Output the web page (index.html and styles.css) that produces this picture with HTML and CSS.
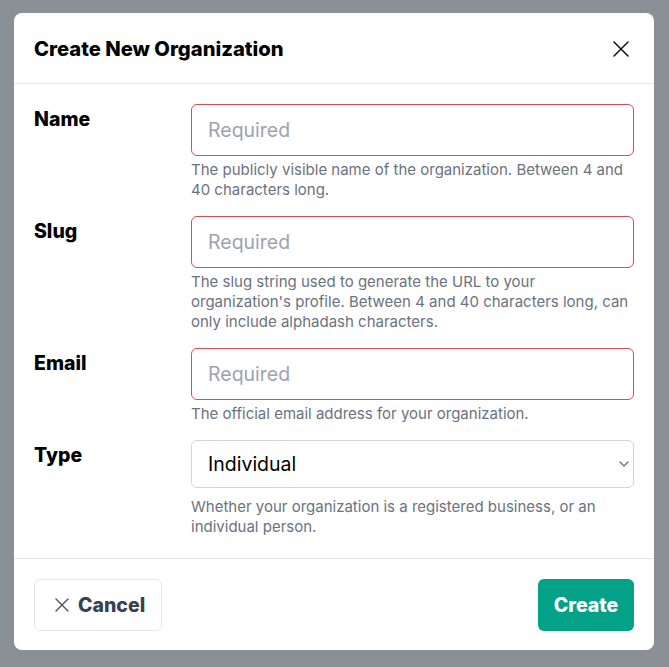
FILE: index.html
```html
<!DOCTYPE html>
<html lang="en">
<head>
<meta charset="utf-8">
<title>Create New Organization</title>
<link rel="stylesheet" href="styles.css">
</head>
<body>
<div class="backdrop">
  <div class="modal">
    <div class="modal-header">
      <h2 class="modal-title">Create New Organization</h2>
      <button class="close-btn" type="button" aria-label="Close">
        <svg width="16" height="16" viewBox="0 0 16 16" fill="none" stroke="#111" stroke-width="1.5" stroke-linecap="round"><path d="M1 1 15 15M15 1 1 15"/></svg>
      </button>
    </div>
    <div class="modal-body">
      <div class="field">
        <label class="label">Name</label>
        <div class="control">
          <input class="input invalid" type="text" placeholder="Required">
          <p class="help">The publicly visible name of the organization. Between 4 and 40 characters long.</p>
        </div>
      </div>
      <div class="field">
        <label class="label">Slug</label>
        <div class="control">
          <input class="input invalid" type="text" placeholder="Required">
          <p class="help">The slug string used to generate the URL to your organization's profile. Between 4 and 40 characters long, can only include alphadash characters.</p>
        </div>
      </div>
      <div class="field">
        <label class="label">Email</label>
        <div class="control">
          <input class="input invalid" type="text" placeholder="Required">
          <p class="help">The official email address for your organization.</p>
        </div>
      </div>
      <div class="field">
        <label class="label">Type</label>
        <div class="control">
          <div class="select-wrap">
            <select class="select">
              <option>Individual</option>
              <option>Business</option>
            </select>
            <svg class="select-arrow" width="10" height="6" viewBox="0 0 10 6" fill="none" stroke="#6b7280" stroke-width="1.3" stroke-linecap="round" stroke-linejoin="round"><path d="M1 1 5 5 9 1"/></svg>
          </div>
          <p class="help help-select">Whether your organization is a registered business, or an individual person.</p>
        </div>
      </div>
    </div>
    <div class="modal-footer">
      <button class="btn btn-cancel" type="button">
        <svg width="16" height="16" viewBox="0 0 16 16" fill="none" stroke="#4b5563" stroke-width="1.4" stroke-linecap="round"><path d="M2 2 14 14M14 2 2 14"/></svg>
        <span>Cancel</span>
      </button>
      <button class="btn btn-create" type="button">Create</button>
    </div>
  </div>
</div>
</body>
</html>
```
FILE: styles.css
```css
* { box-sizing: border-box; }
html, body { margin: 0; padding: 0; }
body {
  font-family: Inter, "Noto Sans", sans-serif;
  background: #8b9097;
  width: 669px;
  height: 667px;
  overflow: hidden;
}
.backdrop {
  padding: 13px 15px 17px 14px;
}
.modal {
  width: 640px;
  height: 637px;
  background: #fff;
  border-radius: 8px;
  display: flex;
  flex-direction: column;
}
.modal-header {
  height: 71px;
  display: flex;
  align-items: center;
  justify-content: space-between;
  padding: 0 20px;
  border-bottom: 1px solid #e5e7eb;
  flex-shrink: 0;
}
.modal-title {
  margin: 0;
  font-size: 20.2px;
  font-weight: 800;
  color: #000;
  line-height: 28px;
  padding-top: 2px;
}
.close-btn {
  border: 0;
  background: none;
  padding: 0;
  width: 16px;
  height: 16px;
  margin-right: 5px;
  margin-top: 2px;
  display: flex;
  align-items: center;
  justify-content: center;
}
.modal-body {
  flex: 1;
  padding: 20px 20px 0 20px;
  display: flex;
  flex-direction: column;
  gap: 16px;
  border-bottom: 1px solid #e5e7eb;
}
.field {
  display: grid;
  grid-template-columns: 157px 443px;
}
.label {
  font-size: 19.5px;
  font-weight: 800;
  color: #000;
  line-height: 28px;
  padding-top: 1px;
}
.control { display: flex; flex-direction: column; }
.input {
  height: 52px;
  width: 100%;
  border: 1px solid #d1d5db;
  border-radius: 6px;
  padding: 0 16px;
  font-family: inherit;
  font-size: 19.5px;
  color: #111;
  outline: none;
}
.input.invalid { border-color: #ef4444; }
.input::placeholder { color: #9ca3af; }
.select-wrap { position: relative; }
.select {
  -webkit-appearance: none;
  appearance: none;
  height: 48px;
  width: 100%;
  border: 1px solid #d1d5db;
  border-radius: 6px;
  padding: 0 16px;
  font-family: inherit;
  font-size: 19.5px;
  color: #000;
  background: #fff;
  outline: none;
}
.select-arrow {
  position: absolute;
  right: 5px;
  top: 21px;
  pointer-events: none;
}
.help {
  margin: 4px 0 0 0;
  font-size: 15px;
  line-height: 20px;
  color: #6b7280;
}
.help.help-select { margin-top: 9px; }
.modal-footer {
  height: 91px;
  flex-shrink: 0;
  display: flex;
  align-items: center;
  justify-content: space-between;
  padding: 0 20px;
}
.btn {
  height: 52px;
  border-radius: 6px;
  font-family: inherit;
  font-size: 19.5px;
  font-weight: 800;
  display: flex;
  align-items: center;
  gap: 8px;
  cursor: pointer;
}
.btn-cancel {
  background: #fff;
  border: 1px solid #e5e7eb;
  color: #374151;
  padding: 0 0 0 19px;
  width: 128px;
}
.btn-create {
  background: #03a187;
  border: 0;
  color: #fff;
  padding: 0;
  width: 96px;
  justify-content: center;
}
```
